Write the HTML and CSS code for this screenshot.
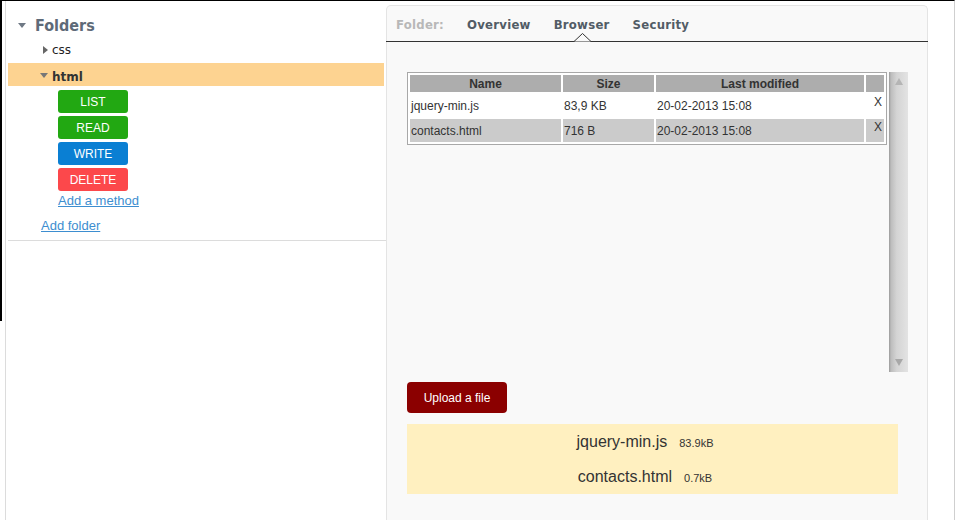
FILE: index.html
```html
<!DOCTYPE html>
<html>
<head>
<meta charset="utf-8">
<link rel="stylesheet" href="styles.css">
</head>
<body>
<div class="page">
  <div class="main">
    <aside class="sidebar">
      <div class="tree-title"><span class="caret-down big"></span>Folders</div>
      <div class="node"><span class="caret-right"></span>css</div>
      <div class="node open"><span class="caret-down"></span>html</div>
      <div class="methods">
        <button class="method green">LIST</button>
        <button class="method green">READ</button>
        <button class="method blue">WRITE</button>
        <button class="method red">DELETE</button>
        <a class="link add-method" href="#">Add a method</a>
      </div>
      <a class="link add-folder" href="#">Add folder</a>
    </aside>
    <section class="panel">
      <nav class="tabs">
        <span class="tab label">Folder:</span>
        <span class="tab">Overview</span>
        <span class="tab active">Browser<svg class="notch" width="17" height="9" viewBox="0 0 17 9"><path d="M0 8.5 L8.5 0.5 L17 8.5 Z" fill="#f9f9f9"/><path d="M0 8.5 L8.5 0.5 L17 8.5" fill="none" stroke="#333" stroke-width="1"/></svg></span>
        <span class="tab">Security</span>
      </nav>
      <div class="content">
        <div class="browser">
          <div class="table-box">
            <table class="files">
              <colgroup><col class="c-name"><col class="c-size"><col class="c-date"><col class="c-x"></colgroup>
              <thead>
                <tr><th>Name</th><th>Size</th><th>Last modified</th><th></th></tr>
              </thead>
              <tbody>
                <tr><td>jquery-min.js</td><td>83,9 KB</td><td>20-02-2013 15:08</td><td class="x">X</td></tr>
                <tr class="alt"><td>contacts.html</td><td>716 B</td><td>20-02-2013 15:08</td><td class="x">X</td></tr>
              </tbody>
            </table>
          </div>
          <div class="scrollbar">
            <span class="arrow up"></span>
            <span class="arrow down"></span>
          </div>
        </div>
        <button class="upload">Upload a file</button>
        <div class="uploads">
          <div class="up-line"><span class="up-name">jquery-min.js</span><span class="up-size">83.9kB</span></div>
          <div class="up-line"><span class="up-name">contacts.html</span><span class="up-size">0.7kB</span></div>
        </div>
      </div>
    </section>
  </div>
</div>
</body>
</html>
```
FILE: styles.css
```css
html, body {
  margin: 0;
  padding: 0;
  background: #fff;
}
body {
  font-family: "Liberation Sans", Arial, sans-serif;
  color: #333;
}
.page {
  position: relative;
  width: 955px;
  height: 520px;
  box-sizing: border-box;
  border-top: 1px solid #000;
  border-right: 1px solid #cfcfcf;
  padding-left: 5px;
  display: flex;
  overflow: hidden;
}
.page::before {
  content: "";
  position: absolute;
  left: 0;
  top: -1px;
  width: 2px;
  height: 321px;
  background: #000;
}
.main {
  flex: 1;
  display: flex;
  align-items: flex-start;
  border-left: 1px solid #dcdcdc;
  padding-left: 2px;
}

/* Sidebar */
.sidebar {
  width: 378px;
  flex: none;
  border-bottom: 1px solid #dcdcdc;
  padding-bottom: 6px;
}
.tree-title {
  display: flex;
  align-items: center;
  padding: 14px 0 2px 10px;
  height: 20px;
  font-family: "DejaVu Sans Condensed", "DejaVu Sans", sans-serif;
  font-stretch: condensed;
  font-weight: bold;
  font-size: 16px;
  color: #5e6a78;
}
.caret-down {
  display: inline-block;
  width: 0;
  height: 0;
  border-left: 4px solid transparent;
  border-right: 4px solid transparent;
  border-top: 5px solid #6f7985;
  margin-right: 7px;
}
.caret-down.big {
  margin-right: 9px;
  margin-top: 1px;
}
.caret-right {
  display: inline-block;
  width: 0;
  height: 0;
  border-top: 4px solid transparent;
  border-bottom: 4px solid transparent;
  border-left: 5px solid #666;
  margin-right: 4px;
}
.node {
  display: flex;
  align-items: center;
  height: 26px;
  padding-left: 35px;
  font-family: "DejaVu Sans", sans-serif;
  font-size: 12px;
  color: #222;
}
.node.open {
  height: 19px;
  padding-top: 4px;
  padding-left: 32px;
  margin-right: 2px;
  background: #fdd391;
  font-weight: bold;
  color: #333;
}
.node.open .caret-down {
  border-top-color: #777;
  margin-right: 4px;
  margin-top: -2px;
}
.methods {
  display: flex;
  flex-direction: column;
  align-items: flex-start;
  gap: 3px;
  padding: 4px 0 0 50px;
}
.method {
  width: 70px;
  height: 23px;
  border: 0;
  border-radius: 3px;
  color: #fff;
  font-family: "Liberation Sans", Arial, sans-serif;
  font-size: 12px;
  padding: 0;
  margin: 0;
  cursor: pointer;
}
.green { background: #22a812; }
.blue { background: #0a7fd3; }
.red { background: #fc484b; }
.link {
  font-family: "Liberation Sans", Arial, sans-serif;
  font-size: 13px;
  line-height: 15px;
  color: #3d8ed0;
  text-decoration: underline;
}
.add-method {
  margin-top: -1px;
}
.add-folder {
  display: inline-block;
  margin: 10px 0 0 33px;
}

/* Panel */
.panel {
  width: 542px;
  flex: none;
  box-sizing: border-box;
  height: 520px;
  margin-top: 4px;
  border: 1px solid #e4e4e4;
  border-bottom: 0;
  border-radius: 5px 5px 0 0;
  background: #f9f9f9;
}
.tabs {
  display: flex;
  align-items: flex-start;
  height: 35px;
  padding-left: 10px;
  gap: 23px;
  border-bottom: 1px solid #333;
  margin: 0 -1px;
  font-family: "DejaVu Sans Condensed", "DejaVu Sans", sans-serif;
  font-stretch: condensed;
  font-weight: bold;
  font-size: 13px;
  letter-spacing: 0.25px;
  color: #525c66;
}
.tab {
  position: relative;
  height: 35px;
  line-height: 37px;
}
.tab.label {
  color: #b8b8b8;
}
.notch {
  position: absolute;
  left: 50%;
  bottom: -1px;
  margin-left: -8px;
  display: block;
}
.content {
  padding: 30px 0 0 20px;
}
.browser {
  display: flex;
  align-items: flex-start;
  gap: 2px;
  height: 300px;
}
.table-box {
  width: 480px;
  box-sizing: border-box;
  border: 1px solid #a8a8a8;
  background: #fff;
}
.files {
  width: 100%;
  table-layout: fixed;
  border-collapse: separate;
  border-spacing: 2px;
  font-size: 12px;
  color: #333;
}
.c-name { width: 151px; }
.c-size { width: 91px; }
.c-date { width: 208px; }
.c-x { width: 18px; }
.files th {
  height: 17px;
  padding: 0;
  background: #adadad;
  font-weight: bold;
  font-size: 12px;
  text-align: center;
  color: #333;
}
.files td {
  height: 22px;
  padding: 0 0 0 1px;
  white-space: nowrap;
  vertical-align: middle;
}
.files tr.alt td {
  background: #cbcbcb;
}
.files td.x {
  vertical-align: top;
  text-align: right;
  padding: 1px 2px 0 0;
}
.scrollbar {
  width: 19px;
  height: 300px;
  display: flex;
  flex-direction: column;
  justify-content: space-between;
  align-items: center;
  padding: 6px 0;
  box-sizing: border-box;
  background: linear-gradient(to right, #9a9a9a 0, #bdbdbd 2px, #d4d4d4 40%, #e3e3e3 100%);
}
.arrow {
  width: 0;
  height: 0;
  border-left: 4px solid transparent;
  border-right: 4px solid transparent;
}
.arrow.up { border-bottom: 7px solid #b5b5b5; }
.arrow.down { border-top: 7px solid #a8a8a8; }
.upload {
  display: block;
  margin-top: 10px;
  width: 100px;
  height: 31px;
  border: 0;
  border-radius: 4px;
  background: #8b0000;
  color: #fff;
  font-family: "Liberation Sans", Arial, sans-serif;
  font-size: 12px;
  padding: 0;
}
.uploads {
  margin-top: 11px;
  width: 491px;
  background: #fff0c0;
}
.up-line {
  height: 35px;
  display: flex;
  align-items: center;
  justify-content: center;
  padding-right: 15px;
}
.up-name {
  font-size: 16px;
  color: #333;
}
.up-size {
  font-size: 11px;
  color: #333;
  margin-left: 12px;
  margin-top: 2px;
}
```
